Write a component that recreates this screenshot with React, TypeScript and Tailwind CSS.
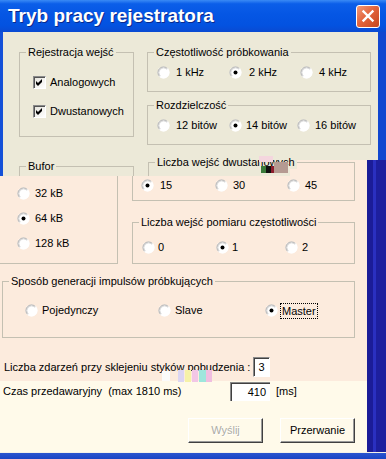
import React from "react";

const Radio = ({ checked = false }: { checked?: boolean }) => (
  <svg width="13" height="13" viewBox="0 0 13 13" className="shrink-0">
    <circle cx="6.5" cy="6.5" r="6" fill="#ffffff" />
    <path d="M2.61 10.39 A5.5 5.5 0 0 1 10.39 2.61" fill="none" stroke="#a3a3a3" />
    <path d="M3.32 9.68 A4.5 4.5 0 0 1 9.68 3.32" fill="none" stroke="#d8d8d8" />
    <path d="M10.39 2.61 A5.5 5.5 0 0 1 2.61 10.39" fill="none" stroke="#ffffff" />
    {checked && <circle cx="6.5" cy="6.5" r="2" fill="#000000" />}
  </svg>
);

const RadioItem = ({
  label,
  checked = false,
  className = "",
  focus = false,
}: {
  label: string;
  checked?: boolean;
  className?: string;
  focus?: boolean;
}) => (
  <div className={"flex items-center h-[13px] shrink-0 " + className}>
    <Radio checked={checked} />
    {focus ? (
      <span className="border border-dotted border-black px-[1px] leading-[14px]">{label}</span>
    ) : (
      <span>{label}</span>
    )}
  </div>
);

const Checkbox = () => (
  <div className="w-[13px] h-[13px] shrink-0 border border-t-[#8a8a8a] border-l-[#8a8a8a] border-b-white border-r-white bg-[linear-gradient(135deg,#e4e2da,#ffffff)] shadow-[inset_1px_1px_0_#555555] flex items-center justify-center">
    <svg width="7" height="7" viewBox="0 0 7 7">
      <polygon points="0,2 2,4 6,0 6,3 2,7 0,5" fill="#000000" />
    </svg>
  </div>
);

export default function App() {
  return (
    <div className="w-[386px] h-[459px] overflow-hidden flex flex-col font-['Liberation_Sans',Arial,sans-serif] text-[11px] leading-[13px] text-black bg-[#ece9d8]">
      {/* Title bar */}
      <div className="h-[32px] shrink-0 flex items-center justify-between pl-[8px] pr-[6px] bg-[linear-gradient(to_bottom,#3a8af5_0%,#0b5ee9_12%,#0556e4_45%,#0352e0_80%,#0a4ad2_100%)]">
        <span className="text-white font-bold text-[19px] leading-[22px] [text-shadow:1px_1px_0_#0a2a8c]">
          Tryb pracy rejestratora
        </span>
        <div className="w-[24px] h-[23px] rounded-[3px] border border-white bg-[linear-gradient(135deg,#f29a78_0%,#e3653d_45%,#c5461f_100%)] flex items-center justify-center">
          <svg width="14" height="14" viewBox="0 0 14 14">
            <path d="M2.5 2.5L11.5 11.5M11.5 2.5L2.5 11.5" stroke="#ffffff" strokeWidth="2.4" strokeLinecap="square" />
          </svg>
        </div>
      </div>

      {/* Top beige band */}
      <div className="h-[128px] shrink-0 flex bg-[#ece9d8] border-l-[3px] border-l-[#1450d8] border-r-[8px] border-r-[#1147d0]">
        <div className="flex pt-[14px] pl-[16px]">
          <fieldset className="w-[115px] h-[91px] border border-[#c4c0b2]">
            <legend className="ml-[6px] px-[2px]">Rejestracja wejść</legend>
            <div className="flex flex-col gap-[16px] pl-[13px] pt-[17px]">
              <div className="flex items-center gap-[4px] h-[13px]">
                <Checkbox />
                <span>Analogowych</span>
              </div>
              <div className="flex items-center gap-[4px] h-[13px]">
                <Checkbox />
                <span>Dwustanowych</span>
              </div>
            </div>
          </fieldset>
          <div className="ml-[13px] w-[224px] flex flex-col gap-[7px]">
            <fieldset className="h-[46px] border border-[#c4c0b2]">
              <legend className="ml-[6px] px-[2px]">Częstotliwość próbkowania</legend>
              <div className="flex pl-[9px] pt-[7px]">
                <RadioItem label="1 kHz" className="w-[72px] gap-[6px]" />
                <RadioItem label="2 kHz" checked className="w-[71px] gap-[7px]" />
                <RadioItem label="4 kHz" className="gap-[6px]" />
              </div>
            </fieldset>
            <fieldset className="h-[46px] border border-[#c4c0b2]">
              <legend className="ml-[6px] px-[2px]">Rozdzielczość</legend>
              <div className="flex pl-[9px] pt-[7px]">
                <RadioItem label="12 bitów" className="w-[72px] gap-[6px]" />
                <RadioItem label="14 bitów" checked className="w-[68px] gap-[4px]" />
                <RadioItem label="16 bitów" className="gap-[5px]" />
              </div>
            </fieldset>
          </div>
        </div>
      </div>

      {/* Lower area with right strip */}
      <div className="flex flex-1 min-h-0">
        <div className="w-[367px] flex flex-col">
          {/* transition band */}
          <div className="h-[16px] shrink-0 flex bg-[linear-gradient(to_right,#1450d8_3px,#ece9d8_3px,#ece9d8_290px,#fcebdd_290px)]">
            <fieldset className="ml-[19px] w-[115px] h-[16px] border border-b-0 border-[#c4c0b2]">
              <legend className="ml-[6px] px-[2px] bg-[#ece9d8]">Bufor</legend>
            </fieldset>
            <fieldset className="ml-[14px] w-[207px] h-[20px] mt-[-4px] border border-b-0 border-[#c4c0b2]">
              <legend className="ml-[6px] px-[2px] bg-[#ece9d8] relative">
                Liczba wejść dwustanowych
                <span className="absolute left-[104px] top-[0px] w-[14px] h-[6px] bg-[#f4d6de]" />
                <span className="absolute left-[106px] top-[10px] w-[5px] h-[7px] bg-[#3a7a3a]" />
                <span className="absolute left-[111px] top-[10px] w-[5px] h-[7px] bg-[#111111]" />
                <span className="absolute left-[116px] top-[10px] w-[3px] h-[7px] bg-[#8c1c2c]" />
                <span className="absolute left-[119px] top-[6px] w-[14px] h-[11px] bg-[#b59a92]" />
              </legend>
            </fieldset>
          </div>

          {/* peach band */}
          <div className="h-[205px] shrink-0 bg-[#fcebdd] flex flex-col">
            <div className="flex">
              <div className="w-[118px] h-[88px] border-r border-b border-[#c4c0b2] flex flex-col gap-[12px] pl-[17px] pt-[11px]">
                <RadioItem label="32 kB" className="gap-[5px]" />
                <RadioItem label="64 kB" checked className="gap-[5px]" />
                <RadioItem label="128 kB" className="gap-[5px]" />
              </div>
              <div className="ml-[14px] w-[223px] flex flex-col">
                <div className="h-[25px] border-l border-r border-b border-[#c4c0b2] flex pl-[8px] pt-[3px]">
                  <RadioItem label="15" checked className="w-[74px] gap-[6px]" />
                  <RadioItem label="30" className="w-[72px] gap-[5px]" />
                  <RadioItem label="45" className="gap-[5px]" />
                </div>
                <fieldset className="mt-[15px] h-[48px] border border-[#c4c0b2]">
                  <legend className="ml-[6px] px-[2px]">Liczba wejść pomiaru częstotliwości</legend>
                  <div className="flex pl-[9px] pt-[12px]">
                    <RadioItem label="0" className="w-[74px] gap-[3px]" />
                    <RadioItem label="1" checked className="w-[69px] gap-[3px]" />
                    <RadioItem label="2" className="gap-[4px]" />
                  </div>
                </fieldset>
              </div>
            </div>
            <fieldset className="ml-[2px] mt-[11px] w-[353px] h-[63px] border border-[#c4c0b2]">
              <legend className="ml-[6px] px-[2px]">Sposób generacji impulsów próbkujących</legend>
              <div className="flex pl-[22px] pt-[16px]">
                <RadioItem label="Pojedynczy" className="w-[133px] gap-[4px]" />
                <RadioItem label="Slave" className="w-[107px] gap-[4px]" />
                <RadioItem label="Master" checked focus className="gap-[2px]" />
              </div>
            </fieldset>
            <div className="flex items-center mt-[19px] pl-[4px]">
              <span className="w-[249px] shrink-0 relative">
                Liczba zdarzeń przy sklejeniu styków pobudzenia :
                <span className="absolute left-[158px] top-[10px] w-[8px] h-[10px] bg-[#fbfbfb]" />
                <span className="absolute left-[174px] top-[9px] w-[6px] h-[12px] bg-[#dcd6f2]" />
                <span className="absolute left-[181px] top-[9px] w-[6px] h-[12px] bg-[#f6f2a8]" />
                <span className="absolute left-[188px] top-[9px] w-[6px] h-[12px] bg-[#f2c6e6]" />
                <span className="absolute left-[195px] top-[9px] w-[7px] h-[12px] bg-[#9ee6dc]" />
                <span className="absolute left-[202px] top-[9px] w-[6px] h-[12px] bg-[#f0bee0]" />
              </span>
              <div className="w-[17px] h-[20px] bg-white border border-t-[#8a8a8a] border-l-[#8a8a8a] border-b-white border-r-white shadow-[inset_1px_1px_0_#404040] flex items-center justify-center">
                3
              </div>
            </div>
          </div>

          {/* cream band */}
          <div className="h-[71px] shrink-0 bg-[#fffaea] flex flex-col">
            <div className="flex items-center mt-[1px] pl-[3px] h-[19px]">
              <span className="w-[227px] shrink-0 whitespace-pre">Czas przedawaryjny  (max 1810 ms)</span>
              <div className="w-[40px] h-[19px] bg-white border-l border-t border-[#8a8a8a] shadow-[inset_1px_1px_0_#404040] flex items-center justify-end pr-[4px]">
                410
              </div>
              <span className="ml-[6px]">[ms]</span>
            </div>
            <div className="flex justify-end gap-[17px] pr-[12px] mt-[17px]">
              <div className="w-[75px] h-[25px] flex items-center justify-center border border-t-white border-l-white border-b-[#404040] border-r-[#404040] shadow-[inset_-1px_-1px_0_#9a9a9a] text-[#acaca6] [text-shadow:1px_1px_0_#ffffff]">
                Wyślij
              </div>
              <div className="w-[75px] h-[25px] flex items-center justify-center border border-t-white border-l-white border-b-[#404040] border-r-[#404040] shadow-[inset_-1px_-1px_0_#9a9a9a]">
                Przerwanie
              </div>
            </div>
          </div>
        </div>
        {/* right navy strip */}
        <div className="flex-1 flex">
          <div className="w-[6px] bg-[#1b1c98]" />
          <div className="w-[3px] bg-[#2a30c0]" />
          <div className="flex-1 bg-[#1d1f9e]" />
        </div>
      </div>

      {/* bottom frame */}
      <div className="h-[7px] shrink-0 bg-[linear-gradient(to_bottom,#f4f1e8_0px,#f4f1e8_1px,#2b55cf_1px,#1a45c4_100%)]" />
    </div>
  );
}
